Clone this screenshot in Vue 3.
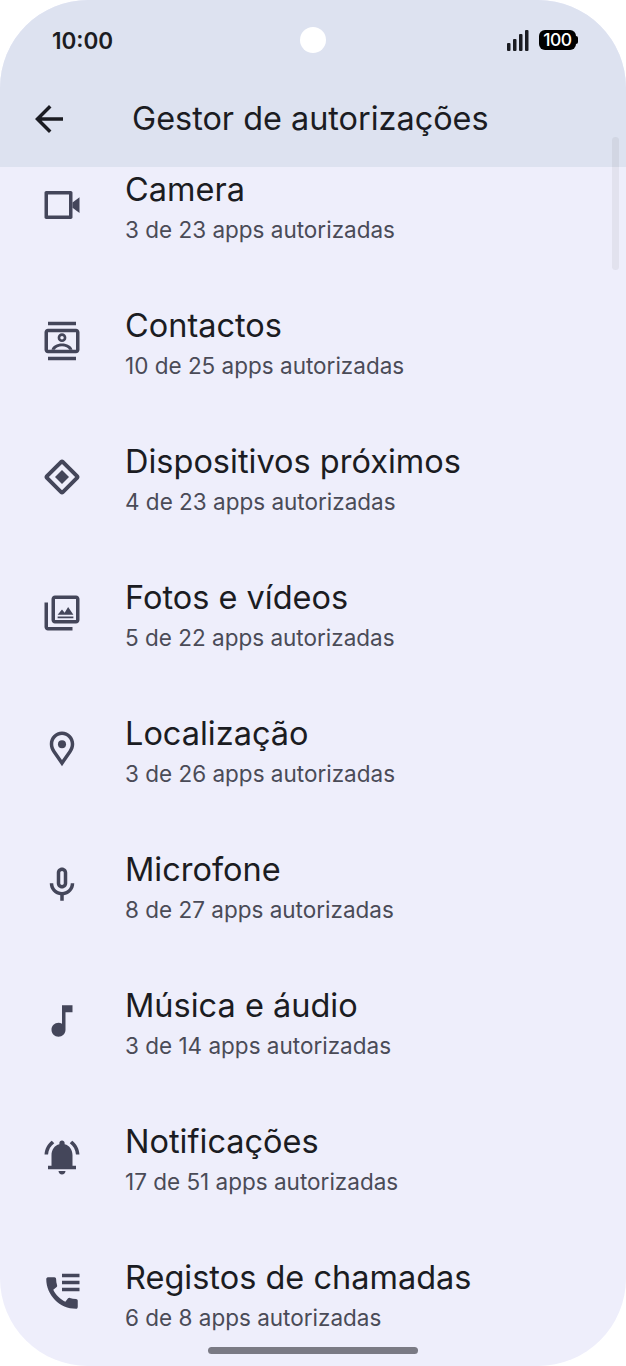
<template>
  <div class="phone">
    <header class="top">
      <div class="status">
        <span class="clock">10:00</span>
        <div class="status-icons">
          <svg class="signal" viewBox="0 0 22 21" aria-hidden="true">
            <rect x="0" y="13" width="3.500" height="8" rx="1" />
            <rect x="6" y="9" width="3.500" height="12" rx="1" />
            <rect x="12" y="4" width="3.500" height="17" rx="1" />
            <rect x="18" y="0" width="3.500" height="21" rx="1" />
          </svg>
          <div class="battery">100</div>
        </div>
      </div>
      <div class="toolbar">
        <svg class="back" viewBox="0 0 24 24" aria-label="Voltar">
          <path d="M20 11H7.83l5.59-5.59L12 4l-8 8 8 8 1.41-1.41L7.83 13H20v-2z" />
        </svg>
        <h1>Gestor de autorizações</h1>
      </div>
    </header>

    <main class="content">
      <ul class="list">
        <li v-for="item in items" :key="item.title" class="row">
          <svg class="icon" viewBox="0 0 24 24" aria-hidden="true">
            <path v-for="d in item.paths" :key="d" :d="d" fill-rule="evenodd" />
          </svg>
          <div class="text">
            <span class="title">{{ item.title }}</span>
            <span class="sub">{{ item.sub }}</span>
          </div>
        </li>
      </ul>
    </main>

    <div class="punch"></div>
    <div class="scrollbar"></div>
    <div class="handle"></div>
  </div>
</template>

<script setup>
const items = [
  {
    title: 'Camera',
    sub: '3 de 23 apps autorizadas',
    paths: [
      'M3 4h14c.55 0 1 .45 1 1v14c0 .55-.45 1-1 1H3c-.55 0-1-.45-1-1V5c0-.55.45-1 1-1zm1 2v12h12V6H4z',
      'M22 7.500v9l-4-3v-3z'
    ]
  },
  {
    title: 'Contactos',
    sub: '10 de 25 apps autorizadas',
    paths: [
      'M4 1h16v2H4zM4 21h16v2H4z',
      'M4 5h16c1.100 0 2 .9 2 2v10c0 1.100-.9 2-2 2H4c-1.100 0-2-.9-2-2V7c0-1.100.9-2 2-2zm0 2v10h16V7H4z',
      'M12 7.600a2.500 2.500 0 1 1 0 5 2.500 2.500 0 0 1 0-5zm0 1.500a1 1 0 1 0 0 2 1 1 0 0 0 0-2z',
      'M12 13.400c2.900 0 5.400 1.300 6 3.600h-1.900c-.6-1.300-2.200-2-4.100-2s-3.500.7-4.100 2H6c.6-2.300 3.100-3.600 6-3.600z'
    ]
  },
  {
    title: 'Dispositivos próximos',
    sub: '4 de 23 apps autorizadas',
    paths: [
      'M12 2c.4 0 .8.15 1.100.45l8.450 8.450c.6.6.6 1.600 0 2.200l-8.450 8.450c-.6.6-1.600.6-2.200 0l-8.450-8.450c-.6-.6-.6-1.600 0-2.200l8.450-8.450C11.200 2.150 11.600 2 12 2zm0 2.500L4.500 12l7.500 7.500 7.500-7.500L12 4.500z',
      'M12 8l4 4-4 4-4-4z'
    ]
  },
  {
    title: 'Fotos e vídeos',
    sub: '5 de 22 apps autorizadas',
    paths: [
      'M8 2h12c1.100 0 2 .9 2 2v12c0 1.100-.9 2-2 2H8c-1.100 0-2-.9-2-2V4c0-1.100.9-2 2-2zm0 2v12h12V4H8z',
      'M9.500 13l2.500-3 1.500 1.800L15.500 8.500 18.500 13zM9.500 14h9v1h-9z',
      'M2 6h2v14h14v2H4c-1.100 0-2-.9-2-2V6z'
    ]
  },
  {
    title: 'Localização',
    sub: '3 de 26 apps autorizadas',
    paths: [
      'M12 2c3.900 0 7 3.200 7 7.200 0 1.800-.6 3.300-1.600 4.800L12 21.800 6.600 14C5.600 12.500 5 11 5 9.200 5 5.200 8.100 2 12 2zm0 2C9.200 4 7 6.300 7 9.200c0 1.300.4 2.400 1.200 3.600l3.800 5.500 3.800-5.500c.8-1.200 1.200-2.300 1.200-3.600C17 6.300 14.800 4 12 4z',
      'M12 7a2.300 2.300 0 1 1 0 4.600A2.300 2.300 0 0 1 12 7z'
    ]
  },
  {
    title: 'Microfone',
    sub: '8 de 27 apps autorizadas',
    paths: [
      'M12 14c1.660 0 3-1.340 3-3V5c0-1.660-1.340-3-3-3S9 3.340 9 5v6c0 1.660 1.340 3 3 3zm-1-9c0-.55.45-1 1-1s1 .45 1 1v6c0 .55-.45 1-1 1s-1-.45-1-1V5z',
      'M17 11c0 2.760-2.240 5-5 5s-5-2.240-5-5H5c0 3.530 2.610 6.430 6 6.920V21h2v-3.080c3.390-.49 6-3.390 6-6.920h-2z'
    ]
  },
  {
    title: 'Música e áudio',
    sub: '3 de 14 apps autorizadas',
    paths: ['M12 3v10.550c-.59-.34-1.270-.55-2-.55-2.210 0-4 1.790-4 4s1.790 4 4 4 4-1.790 4-4V7h4V3h-6z']
  },
  {
    title: 'Notificações',
    sub: '17 de 51 apps autorizadas',
    paths: [
      'M18 17v-6c0-3.070-1.630-5.640-4.500-6.320V4c0-.83-.67-1.500-1.500-1.500s-1.500.67-1.500 1.500v.68C7.640 5.360 6 7.920 6 11v6H4v2h16v-2h-2zM12 22c1.100 0 2-.9 2-2h-4c0 1.100.9 2 2 2z',
      'M7.580 4.080L6.150 2.650C3.750 4.480 2.170 7.300 2.030 10.500h2c.15-2.650 1.510-4.970 3.550-6.420zM19.970 10.500h2c-.15-3.200-1.730-6.020-4.120-7.850l-1.420 1.430c2.020 1.450 3.390 3.770 3.540 6.420z'
    ]
  },
  {
    title: 'Registos de chamadas',
    sub: '6 de 8 apps autorizadas',
    paths: [
      'M20.010 15.380c-1.230 0-2.420-.2-3.530-.56-.35-.12-.74-.03-1.010.24l-1.570 1.970c-2.830-1.350-5.480-3.900-6.890-6.830l1.950-1.660c.27-.28.35-.67.24-1.020-.37-1.110-.56-2.300-.56-3.530 0-.54-.45-.99-.99-.99H4.190C3.650 3 3 3.240 3 3.990 3 13.280 10.730 21 20.010 21c.71 0 .99-.63.99-1.180v-3.450c0-.54-.45-.99-.99-.99z',
      'M12 1h10v2H12zM12 5h10v2H12zM12 9h10v2H12z'
    ]
  }
]
</script>

<style scoped>
.phone {
  position: relative;
  width: 626px;
  height: 1366px;
  overflow: hidden;
  display: flex;
  flex-direction: column;
  border-radius: 88px;
  background: #eeeefb;
  color: #1b1c22;
  font-family: Inter, "Noto Sans", sans-serif;
}

.top {
  flex: 0 0 167px;
  background: #dde2f0;
}

.status {
  height: 80px;
  display: flex;
  align-items: center;
  justify-content: space-between;
  padding: 0 50px 0 52px;
}

.clock {
  font-size: 22.500px;
  font-weight: 600;
}

.status-icons {
  display: flex;
  align-items: center;
  gap: 10px;
}

.signal {
  width: 22px;
  height: 21px;
  fill: #1b1c22;
}

.battery {
  position: relative;
  width: 37px;
  height: 20px;
  border-radius: 6px;
  background: #000;
  color: #fff;
  font-size: 17.500px;
  font-weight: 500;
  line-height: 20px;
  letter-spacing: -0.5px;
  text-align: center;
}

.battery::after {
  content: "";
  position: absolute;
  right: -2px;
  top: 6px;
  width: 2px;
  height: 8px;
  border-radius: 0 2px 2px 0;
  background: #000;
}

.toolbar {
  height: 78px;
  display: flex;
  align-items: center;
  padding-left: 28px;
}

.back {
  width: 42px;
  height: 42px;
  fill: #1b1c22;
}

h1 {
  margin: 0 0 0 62px;
  font-size: 32.400px;
  font-weight: 400;
  line-height: 40px;
}

.content {
  flex: 1;
  min-height: 0;
  overflow: hidden;
}

.list {
  margin: -30px 0 0;
  padding: 0;
  list-style: none;
}

.row {
  height: 136px;
  display: flex;
  align-items: center;
  padding-left: 41px;
}

.icon {
  flex: 0 0 42px;
  width: 42px;
  height: 42px;
  fill: #44465a;
}

.text {
  margin-left: 42px;
  padding-top: 5px;
  display: flex;
  flex-direction: column;
}

.title {
  font-size: 32.500px;
  line-height: 40px;
}

.sub {
  margin-top: 5px;
  font-size: 22.500px;
  line-height: 30px;
  color: #4a4b57;
}

.punch {
  position: absolute;
  left: 300px;
  top: 27px;
  width: 26px;
  height: 26px;
  border-radius: 50%;
  background: #fff;
}

.scrollbar {
  position: absolute;
  left: 612px;
  top: 137px;
  width: 7px;
  height: 133px;
  border-radius: 4px;
  background: rgba(27, 28, 34, 0.06);
}

.handle {
  position: absolute;
  left: 208px;
  top: 1347px;
  width: 210px;
  height: 7px;
  border-radius: 4px;
  background: #7a7a84;
}
</style>

<style>
html,
body {
  background: #fff;
}
</style>
